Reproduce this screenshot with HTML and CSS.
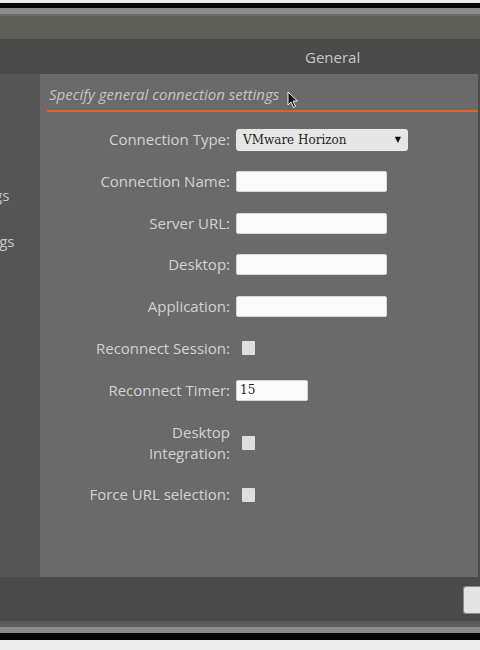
FILE: index.html
```html
<!DOCTYPE html>
<html>
<head>
<meta charset="utf-8">
<link rel="stylesheet" href="styles.css">
</head>
<body>
<div class="screen">
  <div class="bezel"></div>
  <div class="chrome-top"></div>
  <div class="titlebar"></div>
  <div class="tabbar"><span class="tab-title">General</span></div>
  <div class="main">
    <nav class="sidebar">
      <ul class="side-list">
        <li class="side-item">Graphics Settings</li>
        <li class="side-item">Keyboard Settings</li>
      </ul>
    </nav>
    <section class="panel">
      <div class="panel-head">
        <h2 class="subtitle">Specify general connection settings</h2>
        <svg class="cursor" width="12" height="18" viewBox="0 0 12 18"><path d="M1 1 L1 14 L4 11 L6.5 16.5 L8.5 15.5 L6 10 L10.5 10 Z" fill="#111" stroke="#eee" stroke-width="1"/></svg>
      </div>
      <form class="form">
        <label class="lbl">Connection Type:</label>
        <div class="ctl"><div class="select"><span>VMware Horizon</span><span class="caret">&#9660;</span></div></div>

        <label class="lbl">Connection Name:</label>
        <div class="ctl"><input class="text" type="text"></div>

        <label class="lbl">Server URL:</label>
        <div class="ctl"><input class="text" type="text"></div>

        <label class="lbl">Desktop:</label>
        <div class="ctl"><input class="text" type="text"></div>

        <label class="lbl">Application:</label>
        <div class="ctl"><input class="text" type="text"></div>

        <label class="lbl">Reconnect Session:</label>
        <div class="ctl"><span class="check"></span></div>

        <label class="lbl">Reconnect Timer:</label>
        <div class="ctl"><input class="text short" type="text" value="15"></div>

        <label class="lbl two">Desktop<br>Integration:</label>
        <div class="ctl"><span class="check"></span></div>

        <label class="lbl">Force URL selection:</label>
        <div class="ctl"><span class="check"></span></div>
      </form>
    </section>
  </div>
  <div class="footer"><button class="btn" type="button"></button></div>
  <div class="chrome-bottom"></div>
  <div class="bezel bottom"></div>
</div>
</body>
</html>
```

FILE: styles.css
```css
* { box-sizing: border-box; }
html, body { margin: 0; padding: 0; }
body {
  width: 480px;
  height: 650px;
  overflow: hidden;
  background: #ececec;
  font-family: "Open Sans", "Liberation Sans", sans-serif;
}
.screen {
  padding-top: 3px;
  display: flex;
  flex-direction: column;
}
.bezel { height: 5px; background: #050505; }
.bezel.bottom { height: 7px; }
.chrome-top {
  height: 8px;
  background: #8b8b8b;
  border-bottom: 2px solid #6c6c6a;
}
.titlebar { height: 23px; background: #5f5f59; }
.tabbar {
  height: 35px;
  background: #4a4a4a;
  display: flex;
  align-items: center;
  padding-left: 305px;
}
.tab-title {
  color: #c8c8c8;
  font-size: 15px;
}
.main {
  height: 503px;
  display: flex;
  border-right: 2px solid #4c4c4c;
}
.sidebar {
  width: 40px;
  background: #555555;
  overflow: hidden;
}
.side-list {
  list-style: none;
  margin: 111px 0 0 -112px;
  padding: 0;
  white-space: nowrap;
}
.side-item {
  color: #c6c6c6;
  font-size: 15px;
  line-height: 20px;
  margin-bottom: 26px;
}
.panel {
  flex: 1;
  background: #6a6a6a;
  padding-left: 7px;
}
.panel-head {
  display: flex;
  align-items: center;
  gap: 9px;
  height: 38px;
  border-bottom: 2px solid #e0631f;
}
.subtitle {
  margin: 4px 0 0 2px;
  font-size: 15px;
  font-weight: normal;
  font-style: italic;
  color: #c4c4c4;
  line-height: 20px;
}
.cursor { margin-top: 16px; margin-left: -1px; }
.form {
  display: grid;
  grid-template-columns: 183px auto;
  column-gap: 6px;
  row-gap: 20.8px;
  margin-top: 17px;
  align-items: center;
}
.lbl {
  text-align: right;
  color: #d2d2d2;
  font-size: 15px;
  line-height: 21px;
}
.ctl {
  display: flex;
  align-items: center;
  height: 21px;
}
.select {
  width: 172px;
  height: 22px;
  background: #e6e6e6;
  border-radius: 3px;
  display: flex;
  align-items: center;
  justify-content: space-between;
  padding: 0 7px 0 7px;
  font-family: "DejaVu Serif", "Liberation Serif", serif;
  font-size: 12px;
  color: #1e1e1e;
}
.caret { font-size: 8px; color: #111; }
.text {
  width: 151px;
  height: 21px;
  margin: 0;
  border: 1px solid #d8d8d8;
  border-radius: 2px;
  background: #fbfbfb;
  padding: 0 3px;
  font-family: "DejaVu Serif", "Liberation Serif", serif;
  font-size: 12px;
  color: #1e1e1e;
}
.text.short { width: 72px; }
.check {
  display: block;
  width: 13px;
  height: 14px;
  margin-left: 6px;
  background: #dedede;
  border-radius: 1px;
}
.footer {
  height: 44px;
  background: #4a4a4a;
  display: flex;
  justify-content: flex-end;
  align-items: center;
  overflow: hidden;
}
.btn {
  width: 17px;
  height: 28px;
  margin: 0;
  margin-top: 1px;
  border: 1px solid #888;
  border-right: none;
  border-radius: 3px 0 0 3px;
  background: #e4e4e4;
}
.chrome-bottom {
  height: 12px;
  background: linear-gradient(#585858 0 3px, #606060 3px 6px, #8a8a8a 6px);
}
```
